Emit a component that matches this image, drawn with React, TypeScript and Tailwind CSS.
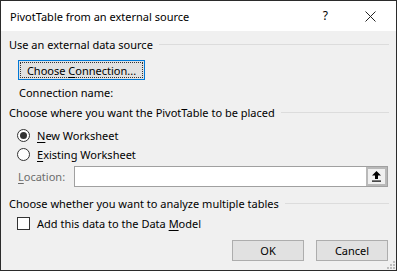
import React from "react";

const font = { fontFamily: '"Noto Sans", "Liberation Sans", sans-serif' };

function Header({ text }: { text: string }) {
  return (
    <div className="flex h-[16px] items-center pl-[8px] pr-[7px]">
      <span className="whitespace-nowrap">{text}</span>
      <div className="ml-[6px] h-px flex-1 bg-[#dcdcdc]" />
    </div>
  );
}

export default function App() {
  return (
    <div
      className="flex h-[271px] w-[397px] flex-col border border-[#2b2b2b] bg-[#f0f0f0] text-[11px] leading-none text-black"
      style={font}
    >
      <div className="flex h-[30px] shrink-0 items-center bg-white pl-[9px]">
        <span className="flex-1 text-[11px]">PivotTable from an external source</span>
        <span className="mr-[37px] text-[12px]">?</span>
        <svg width="11" height="11" viewBox="0 0 11 11" className="mr-[20px]">
          <path d="M0.5 0.5 L10.5 10.5 M10.5 0.5 L0.5 10.5" stroke="#222" strokeWidth="1" />
        </svg>
      </div>
      <div className="relative flex flex-1 flex-col">
        <div className="mt-[5px]">
          <Header text="Use an external data source" />
        </div>
        <div className="mt-[8px] pl-[17px]">
          <div className="flex h-[20px] w-[127px] items-center border border-[#0078d7] bg-[#e1e1e1] p-[1px]">
            <div className="flex h-full w-full items-center justify-center border border-dotted border-[#333]">
              <span className="whitespace-nowrap">
                Choose <span className="underline underline-offset-2">C</span>onnection...
              </span>
            </div>
          </div>
        </div>
        <div className="mt-[4px] flex h-[16px] items-center pl-[18px]">Connection name:</div>
        <div className="mt-[4px]">
          <Header text="Choose where you want the PivotTable to be placed" />
        </div>
        <div className="mt-[7px] flex h-[16px] items-center pl-[16px]">
          <div className="flex h-[13px] w-[13px] items-center justify-center rounded-full border border-[#333] bg-white">
            <div className="h-[7px] w-[7px] rounded-full bg-[#333]" />
          </div>
          <span className="ml-[7px]">
            <span className="underline underline-offset-2">N</span>ew Worksheet
          </span>
        </div>
        <div className="mt-[3px] flex h-[16px] items-center pl-[16px]">
          <div className="h-[13px] w-[13px] rounded-full border border-[#333] bg-white" />
          <span className="ml-[7px]">
            <span className="underline underline-offset-2">E</span>xisting Worksheet
          </span>
        </div>
        <div className="mt-[4px] flex h-[21px] items-center pl-[17px] pr-[8px]">
          <span className="w-[56px] text-[#6d6d6d]">
            <span className="underline underline-offset-2">L</span>ocation:
          </span>
          <div className="flex h-full flex-1 items-stretch border border-[#a0a0a0] bg-white">
            <div className="flex-1" />
            <div className="flex w-[21px] items-center justify-center border-2 border-[#b9b9b9] bg-[#f0f0f0]">
              <svg width="9" height="11" viewBox="0 0 9 11">
                <path d="M4.5 0 L9 4.5 L6 4.5 L6 8 L3 8 L3 4.5 L0 4.5 Z" fill="#000" />
                <rect x="0" y="9.5" width="9" height="1.2" fill="#000" />
              </svg>
            </div>
          </div>
        </div>
        <div className="mt-[8px]">
          <Header text="Choose whether you want to analyze multiple tables" />
        </div>
        <div className="mt-[4px] flex h-[16px] items-center pl-[16px]">
          <div className="h-[13px] w-[13px] border border-[#333] bg-white" />
          <span className="ml-[7px]">
            Add this data to the Data <span className="underline underline-offset-2">M</span>odel
          </span>
        </div>
        <div className="mt-[9px] flex justify-end gap-[12px] pr-[8px]">
          <div className="flex h-[21px] w-[72px] items-center justify-center border border-[#adadad] bg-[#e1e1e1]">
            OK
          </div>
          <div className="flex h-[21px] w-[72px] items-center justify-center border border-[#adadad] bg-[#e1e1e1]">
            Cancel
          </div>
        </div>
        <svg className="absolute bottom-[1px] right-[1px]" width="8" height="8" viewBox="0 0 8 8">
          <rect x="6" y="0" width="2" height="2" fill="#bdbdbd" />
          <rect x="3" y="3" width="2" height="2" fill="#bdbdbd" />
          <rect x="6" y="3" width="2" height="2" fill="#bdbdbd" />
          <rect x="0" y="6" width="2" height="2" fill="#bdbdbd" />
          <rect x="3" y="6" width="2" height="2" fill="#bdbdbd" />
          <rect x="6" y="6" width="2" height="2" fill="#bdbdbd" />
        </svg>
      </div>
    </div>
  );
}
